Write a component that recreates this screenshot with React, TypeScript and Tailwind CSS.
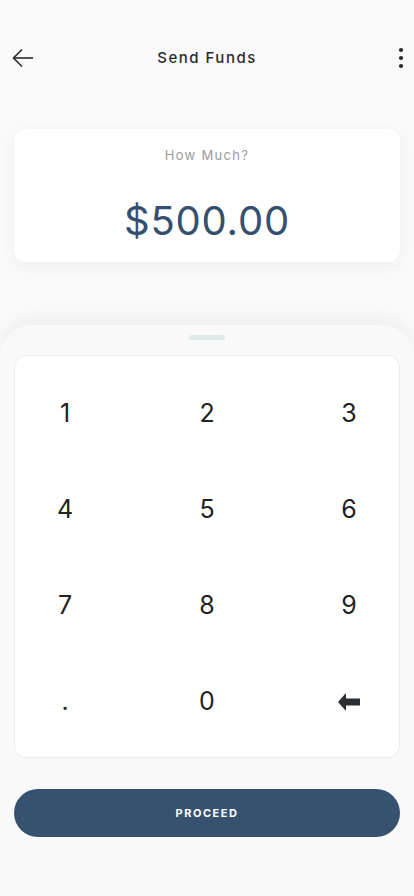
import React from "react";

const rows = [
  ["1", "2", "3"],
  ["4", "5", "6"],
  ["7", "8", "9"],
  [".", "0", "back"],
];

function BackspaceIcon() {
  return (
    <svg width="22" height="20" viewBox="0 0 22 20">
      <polygon points="0,10 8,1 8,6.5 22,6.5 22,13.5 8,13.5 8,19" fill="#2b2f33" />
    </svg>
  );
}

export default function App() {
  return (
    <div
      className="w-[414px] h-[896px] bg-[#fafafa] flex flex-col overflow-hidden"
      style={{ fontFamily: "Inter, Roboto, 'Noto Sans', sans-serif" }}
    >
      {/* header */}
      <div className="h-[56px] mt-[30px] grid grid-cols-[1fr_auto_1fr] items-center px-[12px]">
        <svg width="22" height="22" viewBox="0 0 22 22" fill="none" stroke="#2a2a2a" strokeWidth="1.6">
          <path d="M21 11H2" />
          <path d="M10 2.5L1.5 11L10 19.5" />
        </svg>
        <div className="text-[15px] font-medium tracking-[0.1em] text-[#2a2a2a]">Send Funds</div>
        <div className="flex justify-end">
          <svg width="6" height="22" viewBox="0 0 6 22" fill="#2a2a2a" className="mr-[-2px]">
            <circle cx="3" cy="3" r="2.1" />
            <circle cx="3" cy="11" r="2.1" />
            <circle cx="3" cy="19" r="2.1" />
          </svg>
        </div>
      </div>

      {/* amount card */}
      <div className="mx-[14px] mt-[43px] h-[133px] bg-white rounded-[12px] shadow-[0_4px_18px_rgba(0,0,0,0.05)] flex flex-col items-center">
        <div className="mt-[17px] text-[13px] tracking-[0.1em] text-[#9b9b9b]">How Much?</div>
        <div className="mt-[31px] text-[40px] leading-[48px] tracking-[0.02em] text-[#35506f]">$500.00</div>
      </div>

      {/* bottom sheet */}
      <div className="mt-[63px] flex-1 bg-[#f9f9f9] rounded-t-[32px] shadow-[0_-6px_18px_rgba(0,0,0,0.05)] flex flex-col px-[14px]">
        <div className="mt-[10px] self-center w-[36px] h-[5px] rounded-full bg-[#dfeceb]" />
        <div className="mt-[15px] h-[403px] bg-white rounded-[12px] border border-[#ececec] flex flex-col pt-[9px] pb-[7px] px-[14px]">
          {rows.map((row, i) => (
            <div key={i} className="flex-1 flex items-center justify-between">
              {row.map((k) => (
                <div key={k} className="w-[72px] flex items-center justify-center">
                  {k === "back" ? (
                    <BackspaceIcon />
                  ) : (
                    <span className="text-[25px] text-[#222] leading-none">{k}</span>
                  )}
                </div>
              ))}
            </div>
          ))}
        </div>
        <button className="mt-[31px] h-[48px] w-full rounded-full bg-[#37526f] text-white text-[11px] font-bold tracking-[0.14em]">
          PROCEED
        </button>
      </div>
    </div>
  );
}
